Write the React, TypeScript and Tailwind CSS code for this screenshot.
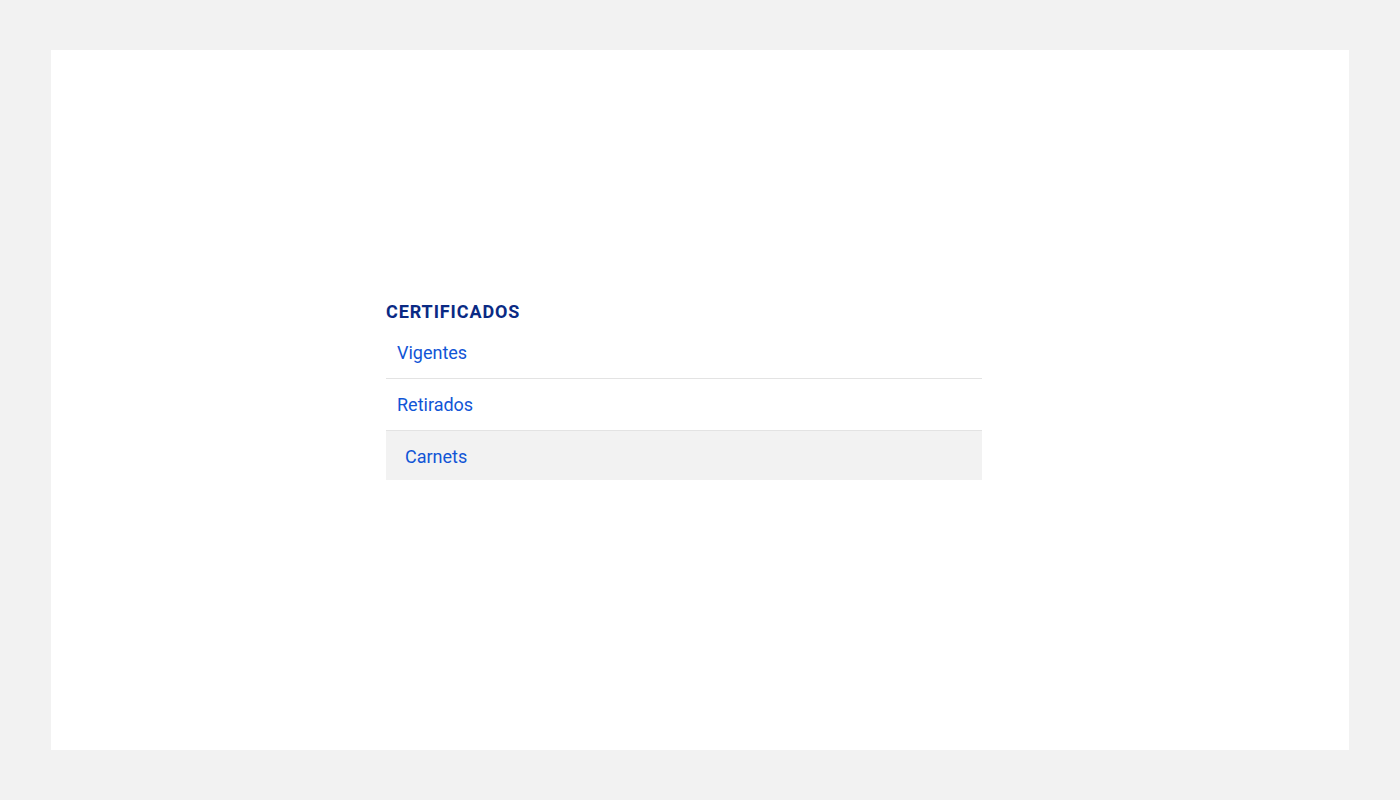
export default function App() {
  const items = [
    { label: 'Vigentes', active: false, h: 'h-[51px]' },
    { label: 'Retirados', active: false, h: 'h-[52px]' },
    { label: 'Carnets', active: true, h: 'h-[49px]' },
  ];

  return (
    <main className="min-h-screen w-full bg-[#f2f2f2] px-[51px] py-[50px] font-['Roboto',sans-serif]">
      <div className="h-[700px] bg-white pl-[335px] pt-[250px]">
        <nav className="w-[596px]">
          <h2 className="mb-1 text-[18px] font-bold leading-6 tracking-[0.9px] text-[#0a2a84]">CERTIFICADOS</h2>
          <ul>
            {items.map((item) => (
              <li
                key={item.label}
                className={
                  item.active
                    ? `flex ${item.h} items-center bg-[#f2f2f2] pl-[19px] pt-[2px]`
                    : `flex ${item.h} items-center border-b border-[#e3e3e3] pl-[11px]`
                }
              >
                <a href="#" className="text-[18px] leading-6 text-[#1155d6]">
                  {item.label}
                </a>
              </li>
            ))}
          </ul>
        </nav>
      </div>
    </main>
  );
}
